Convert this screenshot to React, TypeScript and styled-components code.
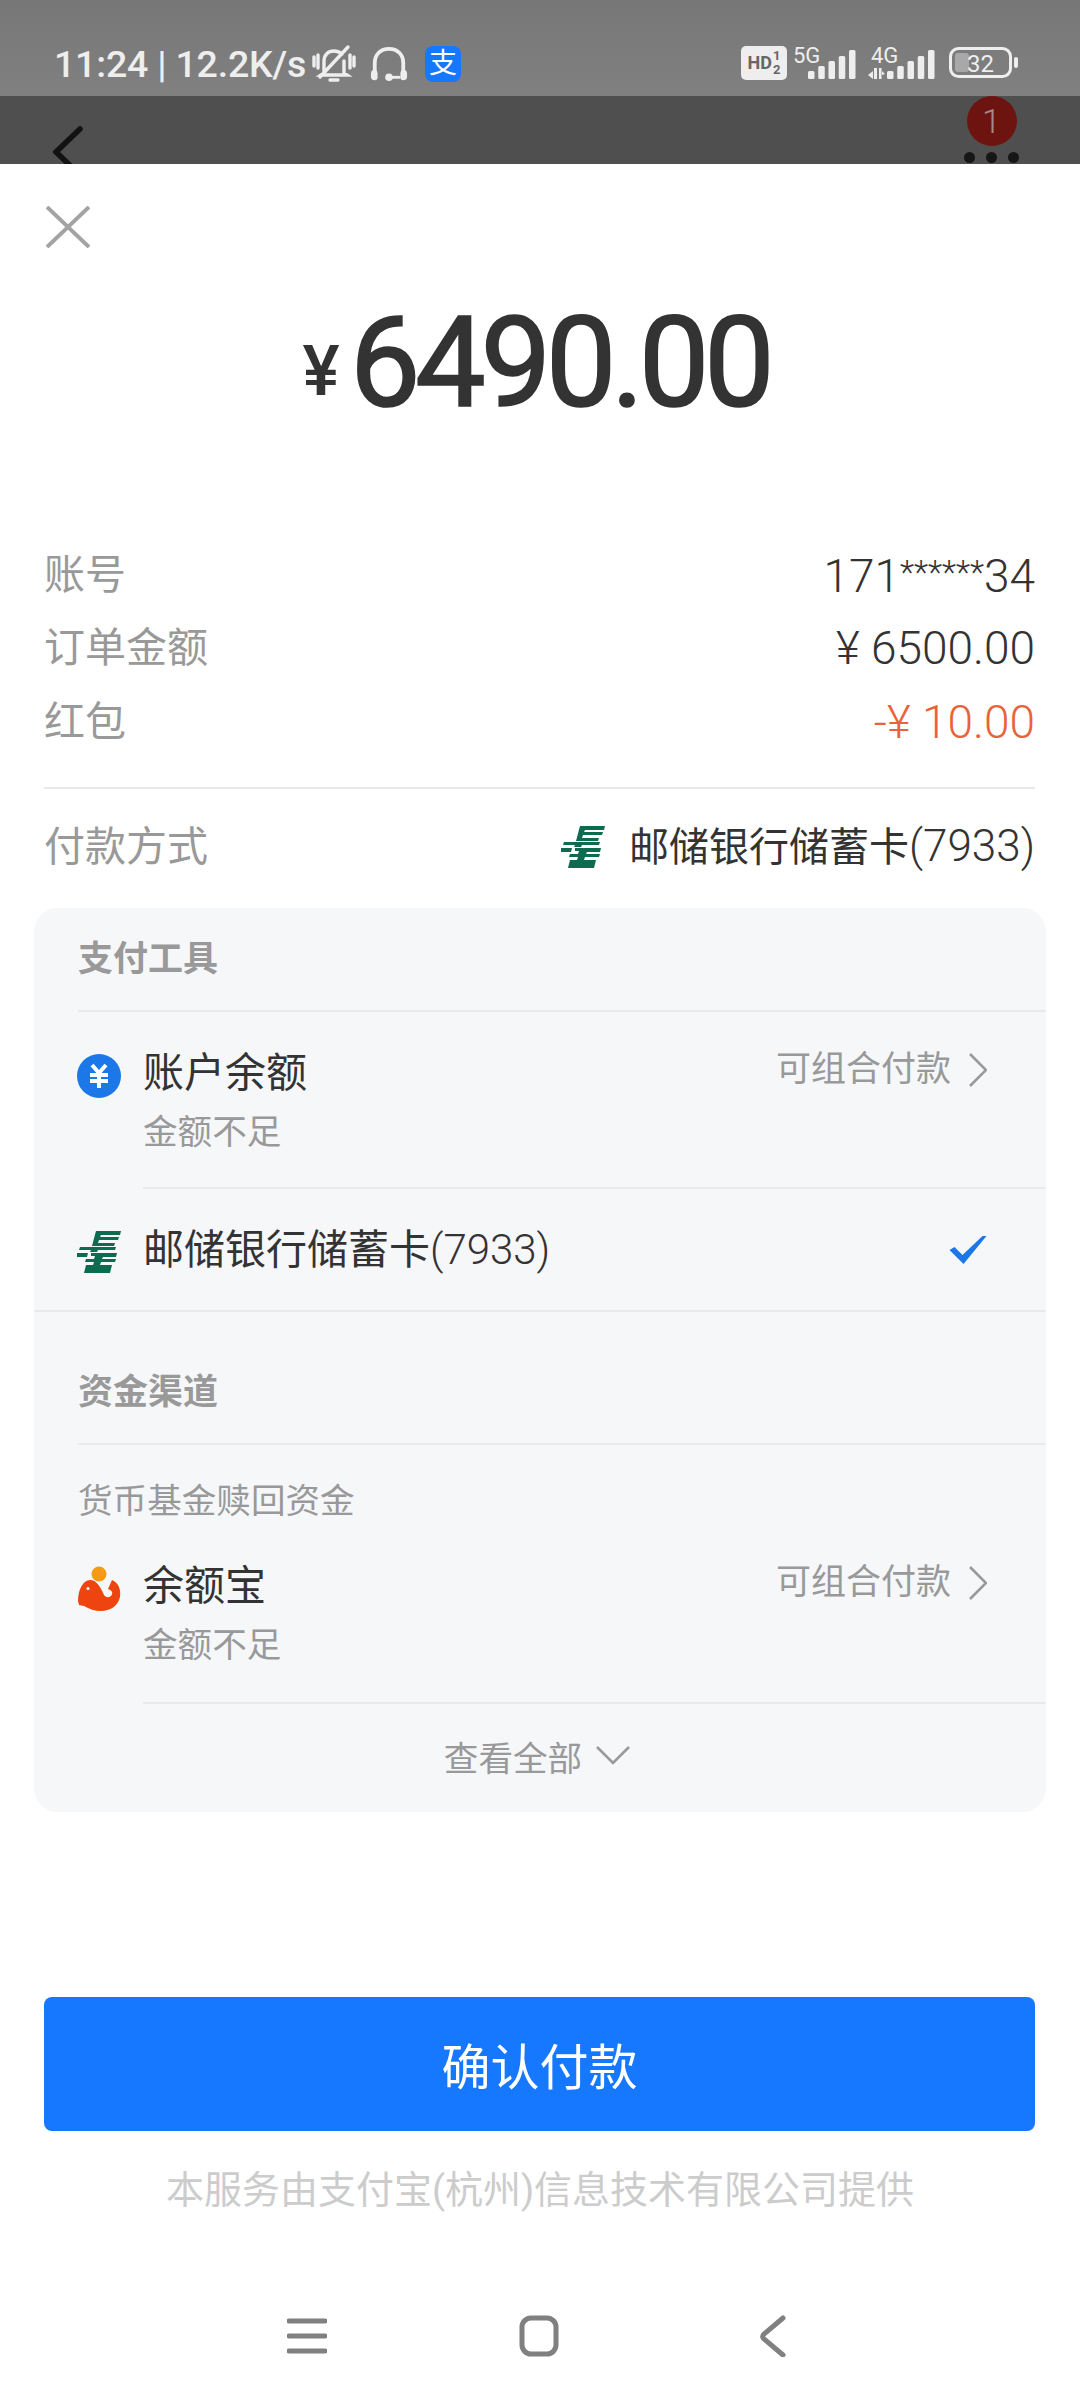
import styled, { createGlobalStyle } from "styled-components";

const FONT = `Roboto, "Noto Sans CJK SC", sans-serif`;

const GlobalStyle = createGlobalStyle`
  html, body {
    margin: 0;
    padding: 0;
    background: #fff;
  }
  body {
    font-family: ${FONT};
  }
  svg {
    display: block;
    flex: none;
  }
`;

const Page = styled.div`
  width: 1080px;
  height: 2400px;
  overflow: hidden;
  display: flex;
  flex-direction: column;
  background: #fff;
`;

const StatusBar = styled.div`
  box-sizing: border-box;
  height: 96px;
  padding: 42px 62px 0 54px;
  display: flex;
  justify-content: space-between;
  align-items: flex-start;
  background: linear-gradient(180deg, #777 0%, #808080 100%);
  color: #eee;
`;

const StatusGroup = styled.div<{ $gap: number }>`
  display: flex;
  align-items: center;
  gap: ${(p) => p.$gap}px;
`;

const StatusText = styled.span`
  font-size: 37.5px;
  line-height: 44px;
  font-weight: 500;
  letter-spacing: -0.2px;
  margin-right: -8px;
  white-space: nowrap;
`;

const AliBadge = styled.span`
  width: 36px;
  height: 36px;
  margin-left: 3px;
  border-radius: 8px;
  background: #1677ff;
  color: #fff;
  font-size: 28px;
  line-height: 36px;
  text-align: center;
`;

const HdBadge = styled.span`
  box-sizing: border-box;
  width: 46px;
  height: 34px;
  border-radius: 5px;
  background: #eee;
  color: #666;
  font-size: 18px;
  line-height: 34px;
  font-weight: 700;
  display: flex;
  align-items: center;
  justify-content: center;
  gap: 1px;
`;

const HdFraction = styled.span`
  display: flex;
  flex-direction: column;
  font-size: 13px;
  line-height: 14px;
`;

const NavHeader = styled.div`
  box-sizing: border-box;
  height: 68px;
  padding: 0 61px 0 53px;
  display: flex;
  justify-content: space-between;
  background: #4f4f4f;
  overflow: hidden;
`;

const MoreWrap = styled.div`
  display: flex;
  flex-direction: column;
  align-items: center;
  gap: 6px;
`;

const NoticeBadge = styled.div`
  width: 50px;
  height: 50px;
  border-radius: 50%;
  background: #6e1410;
  color: #a08a8a;
  font-size: 34px;
  line-height: 50px;
  font-weight: 300;
  text-align: center;
`;

const MoreDots = styled.div`
  display: flex;
  gap: 11px;
`;

const MoreDot = styled.span`
  width: 11px;
  height: 11px;
  border-radius: 50%;
  background: #161616;
`;

const Sheet = styled.div`
  flex: 1;
  display: flex;
  flex-direction: column;
  background: #fff;
  border-radius: 24px 24px 0 0;
`;

const CloseRow = styled.div`
  padding: 42px 0 0 46px;
  height: 40px;
`;

const Amount = styled.div`
  margin-top: 43px;
  height: 148px;
  display: flex;
  justify-content: center;
  align-items: center;
  color: #333;
  padding-right: 8px;
`;

const AmountUnit = styled.span`
  font-size: 70px;
  line-height: 70px;
  font-weight: 500;
  margin: 16px 10px 0 0;
`;

const AmountValue = styled.span`
  font-size: 126px;
  line-height: 148px;
  font-weight: 400;
  -webkit-text-stroke: 1.6px #333;
  letter-spacing: -5.5px;
`;

const Info = styled.div`
  margin: 101px 45px 0 44px;
  padding-bottom: 28px;
  border-bottom: 2px solid #e8e8e8;
`;

const InfoRow = styled.div`
  height: 73.5px;
  display: flex;
  justify-content: space-between;
  align-items: center;
`;

const InfoLabel = styled.span`
  color: #999;
  font-size: 41px;
  line-height: 50px;
`;

const InfoValue = styled.span<{ $tone?: "dark" | "orange" }>`
  color: ${(p) => (p.$tone === "orange" ? "#e8633a" : "#333")};
  font-size: 46px;
  line-height: 50px;
  font-weight: 300;
  white-space: nowrap;
`;

const MaskStars = styled.span`
  font-size: 33px;
  vertical-align: 8px;
`;

const CardTail = styled.span<{ $size: number }>`
  font-size: ${(p) => p.$size}px;
  font-weight: 300;
`;

const MethodValue = styled.span`
  display: flex;
  align-items: center;
  gap: 24px;
  color: #333;
  font-size: 40px;
  line-height: 50px;
  white-space: nowrap;
`;

const MethodRow = styled(InfoRow)`
  margin: 20px 45px 0 44px;
  height: 76px;
`;

const Panel = styled.div`
  margin: 23px 34px 0;
  height: 904px;
  border-radius: 24px;
  background: #f6f7f9;
  overflow: hidden;
`;

const SectionHead = styled.div<{ $tall?: boolean }>`
  box-sizing: border-box;
  margin-left: 44px;
  height: ${(p) => (p.$tall ? "133px" : "104px")};
  padding-top: ${(p) => (p.$tall ? "56px" : "27px")};
  border-bottom: 2px solid #e9eaed;
  color: #999;
  font-size: 35px;
  line-height: 50px;
  font-weight: 700;
`;

const Subhead = styled.div`
  margin: 36px 0 0 44px;
  color: #999;
  font-size: 34.6px;
  line-height: 40px;
`;

const Row = styled.div<{ $flat?: boolean; $height: number }>`
  box-sizing: border-box;
  height: ${(p) => p.$height}px;
  display: flex;
  padding-left: 43px;
  border-bottom: ${(p) => (p.$flat ? "2px solid #e9eaed" : "none")};
`;

const RowIcon = styled.div<{ $top: number }>`
  width: 66px;
  flex: none;
  padding-top: ${(p) => p.$top}px;
`;

const RowBody = styled.div<{ $rule?: boolean; $middle?: boolean }>`
  box-sizing: border-box;
  flex: 1;
  display: flex;
  justify-content: space-between;
  align-items: ${(p) => (p.$middle ? "center" : "flex-start")};
  padding: ${(p) => (p.$middle ? "2px" : "0")} 59px 0 0;
  border-bottom: ${(p) => (p.$rule ? "2px solid #e9eaed" : "none")};
`;

const RowText = styled.div`
  display: flex;
  flex-direction: column;
`;

const RowTitle = styled.div<{ $top?: number }>`
  margin-top: ${(p) => p.$top ?? 0}px;
  color: #333;
  font-size: 41px;
  line-height: 50px;
  white-space: nowrap;
`;

const RowSub = styled.div`
  margin-top: 9px;
  color: #999;
  font-size: 34.6px;
  line-height: 50px;
`;

const RowAside = styled.div<{ $top: number }>`
  display: flex;
  align-items: center;
  gap: 18px;
  margin-top: ${(p) => p.$top}px;
  color: #999;
  font-size: 35px;
  line-height: 50px;
`;

const SeeAll = styled.div`
  height: 104px;
  display: flex;
  justify-content: center;
  align-items: center;
  gap: 14px;
  padding-right: 6px;
  color: #999;
  font-size: 34.6px;
`;

const ConfirmButton = styled.button`
  margin: 185px 45px 0 44px;
  height: 134px;
  border: 0;
  border-radius: 8px;
  background: #1677ff;
  color: #fff;
  font-family: ${FONT};
  font-size: 49px;
`;

const Footnote = styled.div`
  margin-top: 36px;
  color: #ccc;
  font-size: 38px;
  line-height: 46px;
  text-align: center;
`;

const SystemNav = styled.div`
  margin-top: 102px;
  display: flex;
  justify-content: space-between;
  align-items: center;
  padding: 0 277px 0 287px;
`;

const HomeKey = styled.svg`
  margin-right: 8px;
`;

function BellOff() {
  return (
    <svg width="44" height="40" viewBox="0 0 44 40" fill="none" stroke="#eee" strokeWidth="3.4" strokeLinecap="round">
      <path d="M12 29V17c0-6 4-10 10-10 3 0 6 1 8 3M32 17v12l3 2H9l3-2M18 36h8M36 3L8 33M2 13v9M6 11v13M42 13v9M38 11v13" />
    </svg>
  );
}

function Headphones() {
  return (
    <svg width="38" height="38" viewBox="0 0 40 38" fill="none">
      <path d="M5 30V18C5 9 11 3 20 3s15 6 15 15v12" stroke="#eee" strokeWidth="4" />
      <path d="M1 29c0-3 2-4 4-4s3 2 3 4v4c0 2-1 3-3 3s-4-1-4-3zM39 29c0-3-2-4-4-4s-3 2-3 4v4c0 2 1 3 3 3s4-1 4-3z" fill="#eee" />
      <circle cx="20" cy="33" r="4" fill="#eee" />
      <path d="M20 33h12" stroke="#eee" strokeWidth="3" />
    </svg>
  );
}

function Signal({ label, arrows }: { label: string; arrows?: boolean }) {
  const bars = [8, 13, 18, 23, 29];
  const x0 = arrows ? 19 : 15;
  return (
    <svg width={arrows ? 75 : 69} height="42" viewBox={`0 0 ${arrows ? 75 : 69} 42`}>
      <text x={arrows ? 3 : 0} y="21" fontSize="22" fill="#eee" fontFamily="Roboto, sans-serif">
        {label}
      </text>
      {arrows && <path d="M0 33l5-4v8zM6 26h3v11H6zM11 26h2.5v11H11zM14 29l3 3-3 1z" fill="#eee" />}
      {bars.map((h, i) => (
        <rect key={i} x={x0 + i * 10.25} y={37 - h} width="6.5" height={h} rx="1.5" fill="#eee" />
      ))}
    </svg>
  );
}

function Battery() {
  return (
    <svg width="69" height="32" viewBox="0 0 69 32">
      <rect x="1.5" y="1.5" width="60" height="28" rx="8" fill="none" stroke="#eee" strokeWidth="3" />
      <rect x="6" y="6" width="14" height="19" rx="3" fill="#a8a8a8" />
      <text x="18" y="24.5" fontSize="24" fill="#eee" fontFamily="Roboto, sans-serif">
        32
      </text>
      <rect x="65" y="10" width="4" height="11" rx="2" fill="#eee" />
    </svg>
  );
}

function BankLogo() {
  return (
    <svg width="44" height="42" viewBox="0 0 44 42" fill="#0d6b50">
      <path d="M19 0h25l-1 4H24l-1 2h19l-1 3H22l-1 3h17l-1 3H15z" />
      <path d="M3 16h36l-1 3H21l-1 2h-7l1-2H2z" />
      <path d="M0 22h11l-1 4H0zM14 22h26l-1 4H26l-1 2h14l-1 3H24l-1 3h12l-2 8H7l2-8h7l1-3H8l1-3h8l1-3h-4z" />
    </svg>
  );
}

function YuebaoLogo() {
  return (
    <svg width="44" height="46" viewBox="0 0 44 46">
      <circle cx="22" cy="8" r="7.5" fill="#f59a14" />
      <path
        d="M1 35c0-11 5-21 12-21 7 0 11 8 14 15 2 3 7 3 8-1 1-2-1-4-4-5l4-9c7 3 9 10 8 17-2 9-10 14-19 14-6 0-12-2-17-5l-5-1z"
        fill="#ee4510"
      />
      <circle cx="11" cy="22.5" r="1.5" fill="#fff" />
    </svg>
  );
}

function BalanceLogo() {
  return (
    <svg width="44" height="44" viewBox="0 0 44 44">
      <circle cx="22" cy="22" r="22" fill="#1c78e8" />
      <path d="M15 11l7 8 7-8M13 21h18M13 27h18M22 19v15" fill="none" stroke="#fff" strokeWidth="4" />
    </svg>
  );
}

function ArrowRight() {
  return (
    <svg width="18" height="36" viewBox="0 0 18 36" fill="none">
      <path d="M1 2l16 16L1 34" stroke="#999" strokeWidth="2.6" />
    </svg>
  );
}

function ArrowDown() {
  return (
    <svg width="34" height="19" viewBox="0 0 34 19" fill="none">
      <path d="M1 1l16 16L33 1" stroke="#999" strokeWidth="2.6" />
    </svg>
  );
}

function CheckMark() {
  return (
    <svg width="38" height="28" viewBox="0 0 37 28">
      <path d="M0 14l5-3 8 8L33 0h4L14 28z" fill="#1c78e8" />
    </svg>
  );
}

export default function App() {
  return (
    <Page>
      <GlobalStyle />
      <StatusBar>
        <StatusGroup $gap={14}>
          <StatusText>11:24 | 12.2K/s</StatusText>
          <BellOff />
          <Headphones />
          <AliBadge>支</AliBadge>
        </StatusGroup>
        <StatusGroup $gap={6}>
          <HdBadge>
            HD
            <HdFraction>
              <span>1</span>
              <span>2</span>
            </HdFraction>
          </HdBadge>
          <Signal label="5G" />
          <Signal label="4G" arrows />
          <Battery />
        </StatusGroup>
      </StatusBar>
      <NavHeader>
        <svg width="32" height="68" viewBox="0 0 32 68" fill="none">
          <path d="M27 33L3 56l24 23" stroke="#121212" strokeWidth="5.5" strokeLinecap="round" />
        </svg>
        <MoreWrap>
          <NoticeBadge>1</NoticeBadge>
          <MoreDots>
            <MoreDot />
            <MoreDot />
            <MoreDot />
          </MoreDots>
        </MoreWrap>
      </NavHeader>
      <Sheet>
        <CloseRow>
          <svg width="44" height="42" viewBox="0 0 44 42" fill="none">
            <path d="M1 1l42 40M43 1L1 41" stroke="#a3a3a3" strokeWidth="4" />
          </svg>
        </CloseRow>
        <Amount>
          <AmountUnit>¥</AmountUnit>
          <AmountValue>6490.00</AmountValue>
        </Amount>
        <Info>
          <InfoRow>
            <InfoLabel>账号</InfoLabel>
            <InfoValue>
              171<MaskStars>******</MaskStars>34
            </InfoValue>
          </InfoRow>
          <InfoRow>
            <InfoLabel>订单金额</InfoLabel>
            <InfoValue>¥ 6500.00</InfoValue>
          </InfoRow>
          <InfoRow>
            <InfoLabel>红包</InfoLabel>
            <InfoValue $tone="orange">-¥ 10.00</InfoValue>
          </InfoRow>
        </Info>
        <MethodRow>
          <InfoLabel>付款方式</InfoLabel>
          <MethodValue>
            <BankLogo />
            <span>
              邮储银行储蓄卡<CardTail $size={44}>(7933)</CardTail>
            </span>
          </MethodValue>
        </MethodRow>
        <Panel>
          <SectionHead>支付工具</SectionHead>
          <Row $height={177}>
            <RowIcon $top={42}>
              <BalanceLogo />
            </RowIcon>
            <RowBody $rule>
              <RowText>
                <RowTitle $top={36}>账户余额</RowTitle>
                <RowSub>金额不足</RowSub>
              </RowText>
              <RowAside $top={33}>
                可组合付款
                <ArrowRight />
              </RowAside>
            </RowBody>
          </Row>
          <Row $height={123} $flat>
            <RowIcon $top={42}>
              <BankLogo />
            </RowIcon>
            <RowBody $middle>
              <RowTitle>
                邮储银行储蓄卡<CardTail $size={42}>(7933)</CardTail>
              </RowTitle>
              <CheckMark />
            </RowBody>
          </Row>
          <SectionHead $tall>资金渠道</SectionHead>
          <Subhead>货币基金赎回资金</Subhead>
          <Row $height={183}>
            <RowIcon $top={45}>
              <YuebaoLogo />
            </RowIcon>
            <RowBody $rule>
              <RowText>
                <RowTitle $top={40}>余额宝</RowTitle>
                <RowSub>金额不足</RowSub>
              </RowText>
              <RowAside $top={37}>
                可组合付款
                <ArrowRight />
              </RowAside>
            </RowBody>
          </Row>
          <SeeAll>
            查看全部
            <ArrowDown />
          </SeeAll>
        </Panel>
        <ConfirmButton>确认付款</ConfirmButton>
        <Footnote>本服务由支付宝(杭州)信息技术有限公司提供</Footnote>
        <SystemNav>
          <svg width="40" height="40" viewBox="0 0 40 40" fill="none">
            <path d="M2 5h36M2 20h36M2 35h36" stroke="#808080" strokeWidth="5" strokeLinecap="round" />
          </svg>
          <HomeKey width="40" height="42" viewBox="0 0 40 42" fill="none">
            <rect x="3" y="3" width="34" height="36" rx="9" stroke="#808080" strokeWidth="5" />
          </HomeKey>
          <svg width="44" height="42" viewBox="0 0 44 42" fill="none">
            <path d="M24 3L5 19c-2 2-2 3 0 5l19 16" stroke="#808080" strokeWidth="5" strokeLinecap="round" />
          </svg>
        </SystemNav>
      </Sheet>
    </Page>
  );
}
